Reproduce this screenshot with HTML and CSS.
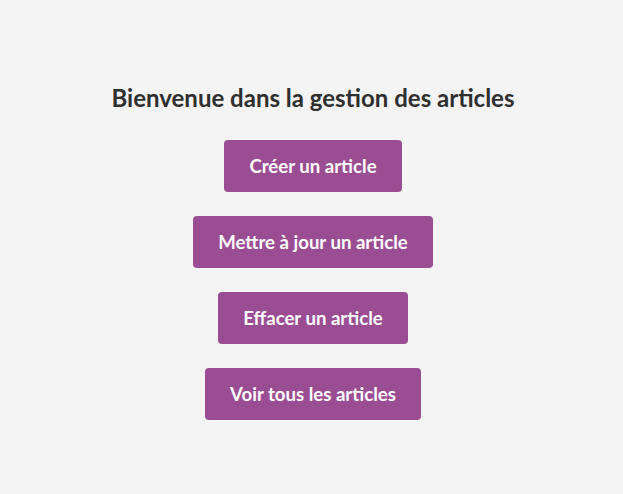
FILE: index.html
```html
<!DOCTYPE html>
<html lang="fr">
<head>
<meta charset="utf-8">
<title>Gestion des articles</title>
<link rel="stylesheet" href="styles.css">
</head>
<body>
<main class="page">
  <h2 class="title">Bienvenue dans la gestion des articles</h2>
  <nav class="actions">
    <a class="btn" href="#">Créer un article</a>
    <a class="btn" href="#">Mettre à jour un article</a>
    <a class="btn" href="#">Effacer un article</a>
    <a class="btn" href="#">Voir tous les articles</a>
  </nav>
</main>
</body>
</html>
```
FILE: styles.css
```css
html, body {
  margin: 0;
  padding: 0;
  background: #f4f4f4;
}
body {
  font-family: "Segoe UI", Lato, "Open Sans", sans-serif;
  color: #333;
}
.page {
  display: flex;
  flex-direction: column;
  align-items: center;
  padding: 82px 0 0 3px;
}
.title {
  margin: 0 0 26px;
  font-size: 24px;
  font-weight: 700;
  line-height: 32px;
  color: #2f2f2f;
}
.actions {
  display: flex;
  flex-direction: column;
  align-items: center;
  gap: 24px;
}
.btn {
  display: block;
  padding: 15px 25px;
  line-height: 22px;
  font-size: 18.6px;
  font-weight: 700;
  color: #fff;
  text-decoration: none;
  background: #9b4d93;
  border-radius: 4px;
}
```
